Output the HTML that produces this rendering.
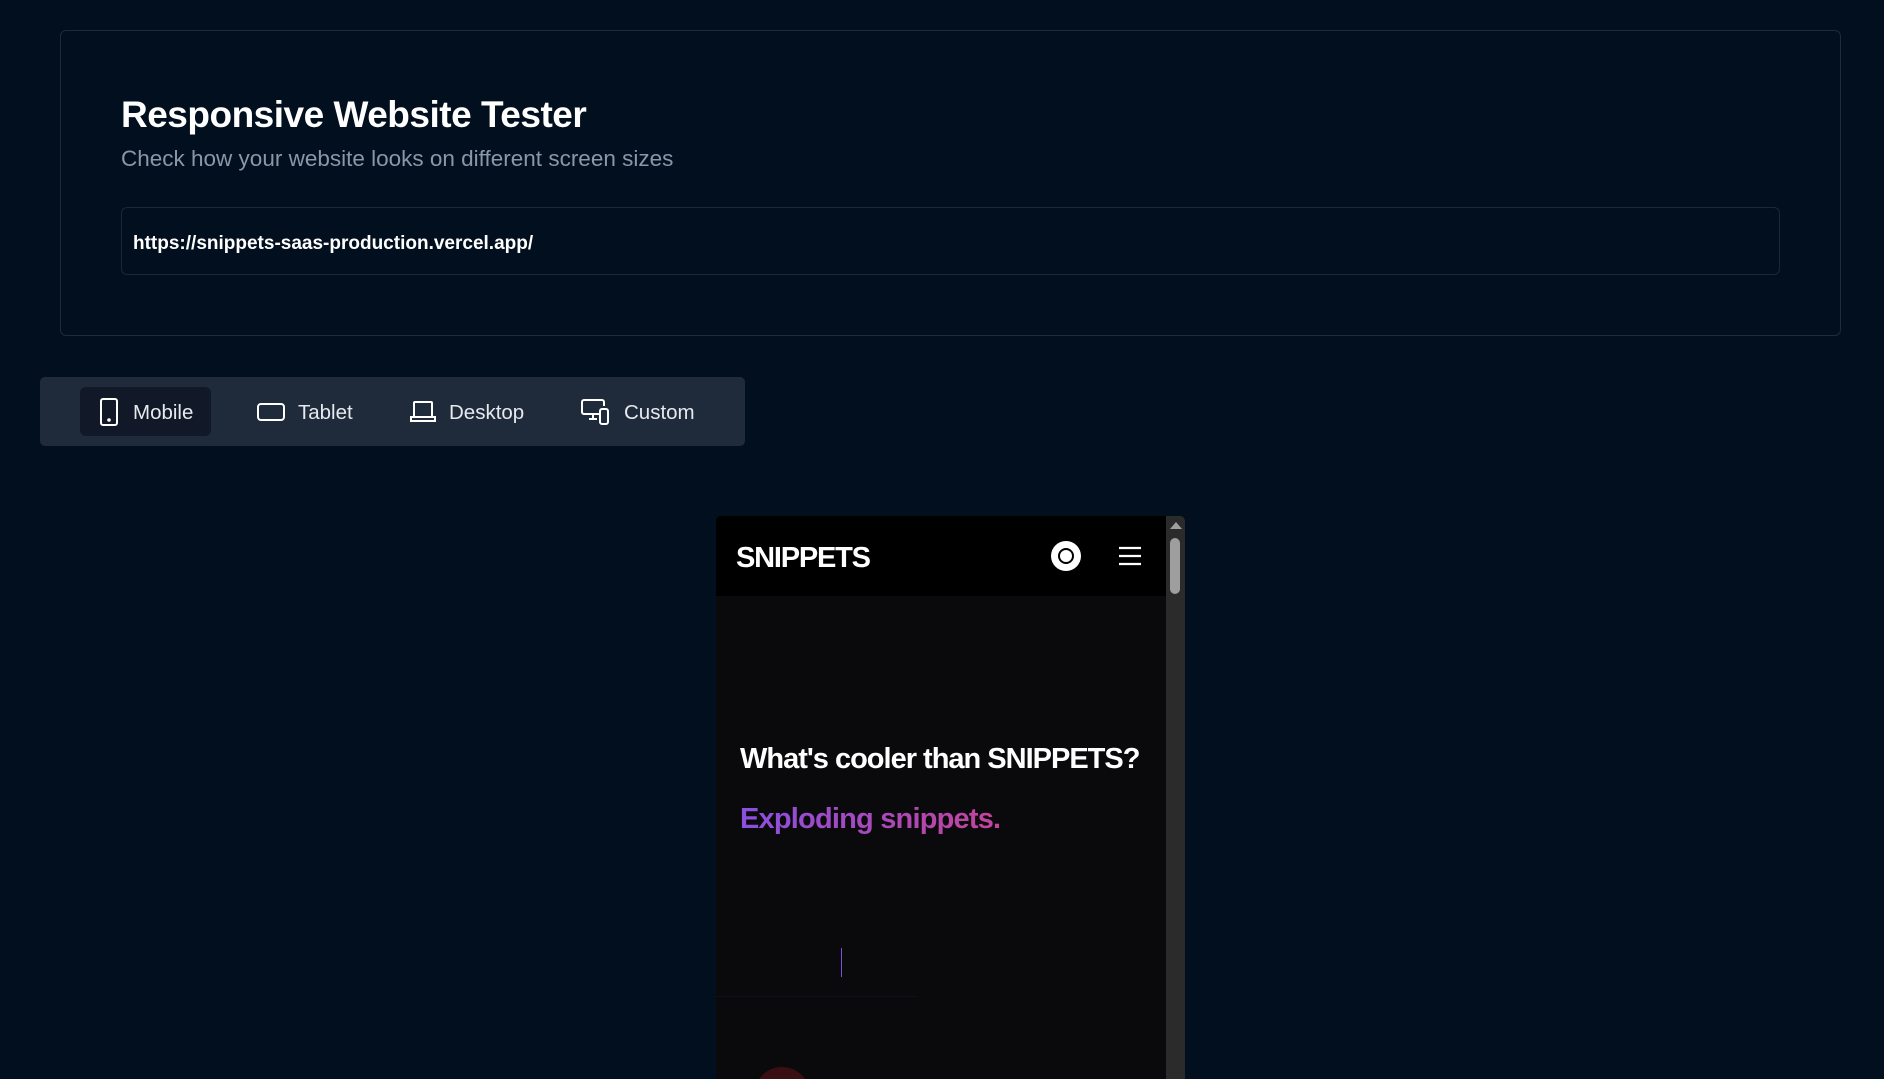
<!DOCTYPE html>
<html><head><meta charset="utf-8"><style>
*{box-sizing:border-box;margin:0;padding:0}
body{width:1884px;height:1079px;overflow:hidden;background:#020f1f;font-family:"Liberation Sans",sans-serif;position:relative;color:#fff}
.card{position:absolute;left:60px;top:30px;width:1781px;height:306px;border:1px solid #1f2b3c;border-radius:6px}
h1{position:absolute;left:121px;top:94px;font-size:37px;font-weight:bold;letter-spacing:-0.5px}
.sub{position:absolute;left:121px;top:146px;font-size:22.5px;color:#8a97a8}
.inp{position:absolute;left:121px;top:207px;width:1659px;height:68px;border:1px solid #1c2737;border-radius:6px;font-size:19px;font-weight:bold;padding:25px 0 0 11px}
.tabs{position:absolute;left:40px;top:377px;width:705px;height:69px;background:#1f2a3b;border-radius:5px}
.tab{position:absolute;top:10px;height:49px;display:flex;align-items:center;font-size:20.5px;color:#e6e9ee;padding-top:3px}
.tab svg{margin-right:13px;margin-top:-3px}
.act{background:#111827;border-radius:6px}
.frame{position:absolute;left:716px;top:516px;width:469px;height:563px;background:#0a0a0c;border-radius:5px 5px 0 0;overflow:hidden}
.hdr{position:absolute;left:0;top:0;width:450px;height:80px;background:#000}
.logo{position:absolute;left:20px;top:26px;font-size:29px;font-weight:bold;letter-spacing:-1.2px}
.sb{position:absolute;left:450px;top:0;width:19px;height:563px;background:#2b2b2b}
.thumb{position:absolute;left:4px;top:22px;width:10px;height:56px;background:#9e9e9e;border-radius:5px}
.q{position:absolute;left:24px;top:227px;font-size:29px;font-weight:bold;letter-spacing:-1px}
.e{position:absolute;left:24px;top:287px;font-size:29px;font-weight:bold;letter-spacing:-0.8px;background:linear-gradient(90deg,#8b4fe0,#c3449a);-webkit-background-clip:text;color:transparent}
</style></head><body>
<div class="card"></div>
<h1>Responsive Website Tester</h1>
<div class="sub">Check how your website looks on different screen sizes</div>
<div class="inp">https://snippets-saas-production.vercel.app/</div>
<div class="tabs">
 <div class="tab act" style="left:40px;width:131px;padding-left:18px"><svg width="22" height="28" viewBox="0 0 22 28" fill="none" stroke="#fff" stroke-width="2"><rect x="3" y="1" width="16" height="26" rx="2"/><circle cx="11" cy="22" r="0.8" fill="#fff"/></svg>Mobile</div>
 <div class="tab" style="left:217px"><svg width="28" height="22" viewBox="0 0 28 22" fill="none" stroke="#fff" stroke-width="2"><rect x="1" y="3" width="26" height="16" rx="3"/></svg>Tablet</div>
 <div class="tab" style="left:370px"><svg width="26" height="24" viewBox="0 0 26 24" fill="none" stroke="#fff" stroke-width="2"><rect x="4" y="2" width="18" height="15" rx="1"/><path d="M1 17h24v4H1z"/></svg>Desktop</div>
 <div class="tab" style="left:541px"><svg width="30" height="26" viewBox="0 0 30 26" fill="none" stroke="#fff" stroke-width="2"><path d="M18 15H3a2 2 0 0 1-2-2V3a2 2 0 0 1 2-2h18a2 2 0 0 1 2 2v4"/><path d="M8 20h8M12 15v5"/><rect x="19" y="10" width="8" height="15" rx="2"/></svg>Custom</div>
</div>
<div class="frame">
 <div class="hdr"><div class="logo">SNIPPETS</div>
  <svg style="position:absolute;left:334px;top:24px" width="32" height="32" viewBox="0 0 32 32"><circle cx="16" cy="16" r="15" fill="#fff"/><circle cx="16" cy="16" r="8" fill="#000"/><circle cx="16" cy="16" r="6" fill="#fff"/></svg>
  <svg style="position:absolute;left:402px;top:29px" width="24" height="22" viewBox="0 0 24 22" stroke="#fff" stroke-width="2.2"><path d="M1 3h22M1 11h22M1 19h22"/></svg>
 </div>
 <div class="q">What's cooler than SNIPPETS?</div>
 <div class="e">Exploding snippets.</div>
 <div style="position:absolute;left:125px;top:432px;width:1px;height:29px;background:#7c4fe0"></div>
 <div style="position:absolute;left:0;top:480px;width:200px;height:1px;background:#101018"></div>
 <div style="position:absolute;left:38px;top:551px;width:56px;height:56px;border-radius:50%;background:#3a0f14"></div>
 <div class="sb"><div style="position:absolute;left:4px;top:6px;width:0;height:0;border-left:6px solid transparent;border-right:6px solid transparent;border-bottom:7px solid #9e9e9e"></div><div class="thumb"></div></div>
</div>
</body></html>
